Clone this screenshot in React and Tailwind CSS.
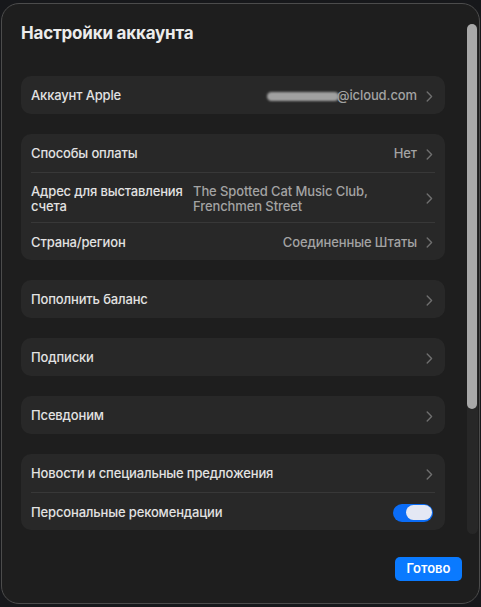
import React from "react";

const FONT = { fontFamily: "Inter, 'Noto Sans', 'Liberation Sans', sans-serif" };

function Chevron() {
  return (
    <svg width="7" height="11" viewBox="0 0 7 11" fill="none" aria-hidden className="shrink-0">
      <path d="M1.2 1 L5.6 5.5 L1.2 10" stroke="#6f6f6f" strokeWidth="1.4" strokeLinecap="round" strokeLinejoin="round" />
    </svg>
  );
}

function Row({ label, value, h = "h-[38px]", children }) {
  return (
    <div className={`flex ${h} items-center pl-[10px] pr-[12px] pt-[2px]`}>
      <span className="text-[13px] font-medium tracking-[-0.15px] text-[#e2e2e2]">{label}</span>
      <div className="ml-auto flex items-center gap-[9px]">
        {value ? <span className="text-[13px] font-medium tracking-[-0.1px] text-[#a3a3a3]">{value}</span> : null}
        {children}
        <Chevron />
      </div>
    </div>
  );
}

function Divider() {
  return <div className="mx-[10px] h-px bg-[#383838]" />;
}

function Card({ children }) {
  return <div className="rounded-[10px] bg-[#282828]">{children}</div>;
}

export default function App() {
  return (
    <div className="min-h-screen bg-[#17181b] pl-[1px] pt-[3px]" style={FONT}>
      <div className="flex h-[601px] w-[479px] flex-col rounded-[18px] border border-[#4c4c4c] bg-[#1e1e1e]">
        <div className="flex flex-1">
          <div className="w-[443px] pl-[19px]">
            <h1 className="mt-[18px] text-[17px] font-bold leading-[22px] tracking-[-0.2px] text-[#ececec]">
              Настройки аккаунта
            </h1>

            <div className="mt-[32px] flex flex-col gap-5">
              <Card>
                <div className="flex h-[38px] items-center pl-[10px] pr-[12px] pt-[2px]">
                  <span className="text-[13px] font-medium tracking-[-0.15px] text-[#e2e2e2]">Аккаунт Apple</span>
                  <div className="ml-auto flex items-center gap-[9px]">
                    <span className="flex items-center text-[13px] font-medium tracking-[-0.1px] text-[#a3a3a3]">
                      <span className="mr-[-2px] inline-block h-[9px] w-[72px] rounded-full bg-[#a0a0a0] blur-[1px]" />
                      @icloud.com
                    </span>
                    <Chevron />
                  </div>
                </div>
              </Card>

              <Card>
                <Row label="Способы оплаты" value="Нет" />
                <Divider />
                <div className="flex h-[49px] items-center pl-[10px] pr-[12px] pt-[2px]">
                  <span className="w-[162px] text-[13px] font-medium leading-[15px] tracking-[-0.15px] text-[#e2e2e2]">
                    Адрес для выставления счета
                  </span>
                  <span className="w-[210px] text-[13px] font-medium leading-[15px] tracking-[-0.1px] text-[#a3a3a3]">
                    The Spotted Cat Music Club, Frenchmen Street
                  </span>
                  <div className="ml-auto">
                    <Chevron />
                  </div>
                </div>
                <Divider />
                <Row label="Страна/регион" value="Соединенные Штаты" h="h-[37px]" />
              </Card>

              <Card>
                <Row label="Пополнить баланс" />
              </Card>

              <Card>
                <Row label="Подписки" />
              </Card>

              <Card>
                <Row label="Псевдоним" />
              </Card>

              <Card>
                <Row label="Новости и специальные предложения" />
                <Divider />
                <div className="flex h-[37px] items-center pl-[10px] pr-[12px] pt-[2px]">
                  <span className="text-[13px] font-medium tracking-[-0.15px] text-[#e2e2e2]">Персональные рекомендации</span>
                  <div className="ml-auto flex h-[18px] w-[40px] items-center justify-end rounded-full bg-[#0a6cf6] pr-[1px]">
                    <div className="h-[15px] w-[26px] rounded-full bg-[#e4e8f4]" />
                  </div>
                </div>
              </Card>
            </div>
          </div>

          <div className="ml-[22px] mt-[20px] h-[510px] w-[11px] rounded-full bg-[#272727]">
            <div className="h-[385px] w-[10px] rounded-full bg-[#a9a9a9]" />
          </div>
        </div>

        <div className="flex justify-end pb-[22px] pr-[17px]">
          <button className="h-[24px] w-[67px] rounded-[5px] bg-[#0a7aff] text-[13px] font-semibold text-white">
            Готово
          </button>
        </div>
      </div>
    </div>
  );
}
